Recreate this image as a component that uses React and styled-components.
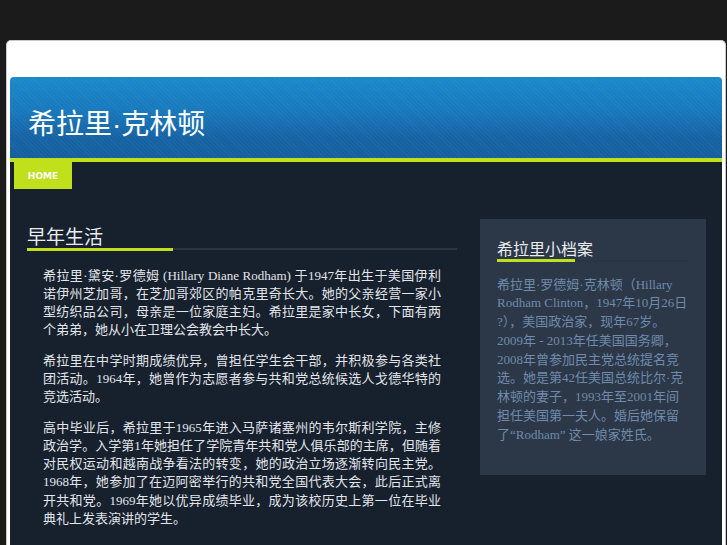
import React from 'react';
import styled, { createGlobalStyle } from 'styled-components';

const GlobalStyle = createGlobalStyle`
  html, body {
    margin: 0;
    padding: 0;
    background: #1b1b1b;
  }
  body {
    font-family: 'Liberation Serif', 'Noto Sans CJK SC', serif;
  }
`;

const Wrapper = styled.div`
  width: 712px;
  margin: 40px 0 0 6px;
  padding: 36px 3px 0 3px;
  background: #fff;
  border: 1px solid #c9c9c9;
  border-bottom: none;
  border-radius: 5px 5px 0 0;
`;

const Header = styled.header`
  height: 49px;
  padding: 32px 18px 0 18px;
  border-radius: 4px 4px 0 0;
  border-bottom: 4px solid #bfe11b;
  background:
    repeating-linear-gradient(45deg, rgba(255, 255, 255, 0.035) 0 1px, transparent 1px 3px),
    linear-gradient(180deg, #1a89ca 0%, #1879bd 40%, #1663a4 75%, #155f9f 100%);
`;

const SiteTitle = styled.h1`
  margin: 0;
  font-family: 'Liberation Sans', 'Noto Sans CJK SC', sans-serif;
  font-weight: 400;
  font-size: 28px;
  line-height: 32px;
  color: #fff;
`;

const Main = styled.div`
  background: #17202d;
  padding-bottom: 40px;
`;

const Nav = styled.nav`
  display: flex;
  padding: 0 4px;
  height: 27px;
`;

const NavItem = styled.a`
  display: flex;
  align-items: center;
  justify-content: center;
  width: 58px;
  background: ${p => (p.active ? '#bfe01b' : 'transparent')};
  color: #fff;
  font-family: 'DejaVu Sans', sans-serif;
  font-weight: bold;
  font-size: 9px;
  text-transform: uppercase;
  text-decoration: none;
`;

const Content = styled.div`
  display: flex;
  align-items: flex-start;
  gap: 23px;
  padding: 30px 16px 0 17px;
`;

const Column = styled.section`
  flex: 1;
  min-width: 0;
`;

const Heading = styled.h2`
  position: relative;
  margin: ${p => (p.small ? '0' : '4.5px 0 0')};
  padding-bottom: ${p => (p.small ? '2px' : '0')};
  font-family: 'Noto Sans CJK SC', 'Liberation Serif', serif;
  font-weight: 400;
  font-size: ${p => (p.small ? '16px' : '19px')};
  line-height: ${p => (p.small ? '20px' : '24px')};
  color: #e9ebee;
  border-bottom: 2px solid #2a3442;

  &::after {
    content: '';
    position: absolute;
    left: 0;
    bottom: ${p => (p.small ? '-2px' : '-3px')};
    width: ${p => (p.small ? '78px' : '146px')};
    height: 3px;
    background: #bfe01b;
  }
`;

const Body = styled.div`
  padding: 17px 16px 0 16px;
`;

const Para = styled.p`
  margin: 0 0 12px;
  font-size: 13px;
  line-height: 18.3px;
  color: #e2e5ea;
  text-align: justify;
`;

const Sidebar = styled.aside`
  width: 226px;
  box-sizing: border-box;
  padding: 19px 18px 30px 17px;
  background: #2c3848;
  margin-top: -0.5px;
`;

const SideText = styled.p`
  margin: 14px 0 0;
  font-size: 13px;
  line-height: 18.8px;
  color: #6f8aab;
`;

export default function App() {
  return (
    <>
      <GlobalStyle />
      <Wrapper>
        <Header>
          <SiteTitle>希拉里·克林顿</SiteTitle>
        </Header>
        <Main>
          <Nav>
            <NavItem href="#" active>Home</NavItem>
          </Nav>
          <Content>
            <Column>
              <Heading>早年生活</Heading>
              <Body>
                <Para>
                  希拉里·黛安·罗德姆 (Hillary Diane Rodham) 于1947年出生于美国伊利诺伊州芝加哥，在芝加哥郊区的帕克里奇长大。她的父亲经营一家小型纺织品公司，母亲是一位家庭主妇。希拉里是家中长女，下面有两个弟弟，她从小在卫理公会教会中长大。
                </Para>
                <Para>
                  希拉里在中学时期成绩优异，曾担任学生会干部，并积极参与各类社团活动。1964年，她曾作为志愿者参与共和党总统候选人戈德华特的竞选活动。
                </Para>
                <Para>
                  高中毕业后，希拉里于1965年进入马萨诸塞州的韦尔斯利学院，主修政治学。入学第1年她担任了学院青年共和党人俱乐部的主席，但随着对民权运动和越南战争看法的转变，她的政治立场逐渐转向民主党。1968年，她参加了在迈阿密举行的共和党全国代表大会，此后正式离开共和党。1969年她以优异成绩毕业，成为该校历史上第一位在毕业典礼上发表演讲的学生。
                </Para>
              </Body>
            </Column>
            <Sidebar>
              <Heading small>希拉里小档案</Heading>
              <SideText>
                希拉里·罗德姆·克林顿（Hillary Rodham Clinton，1947年10月26日 ?），美国政治家，现年67岁。2009年 - 2013年任美国国务卿，2008年曾参加民主党总统提名竞选。她是第42任美国总统比尔·克林顿的妻子，1993年至2001年间担任美国第一夫人。婚后她保留了“Rodham” 这一娘家姓氏。
              </SideText>
            </Sidebar>
          </Content>
        </Main>
      </Wrapper>
    </>
  );
}
